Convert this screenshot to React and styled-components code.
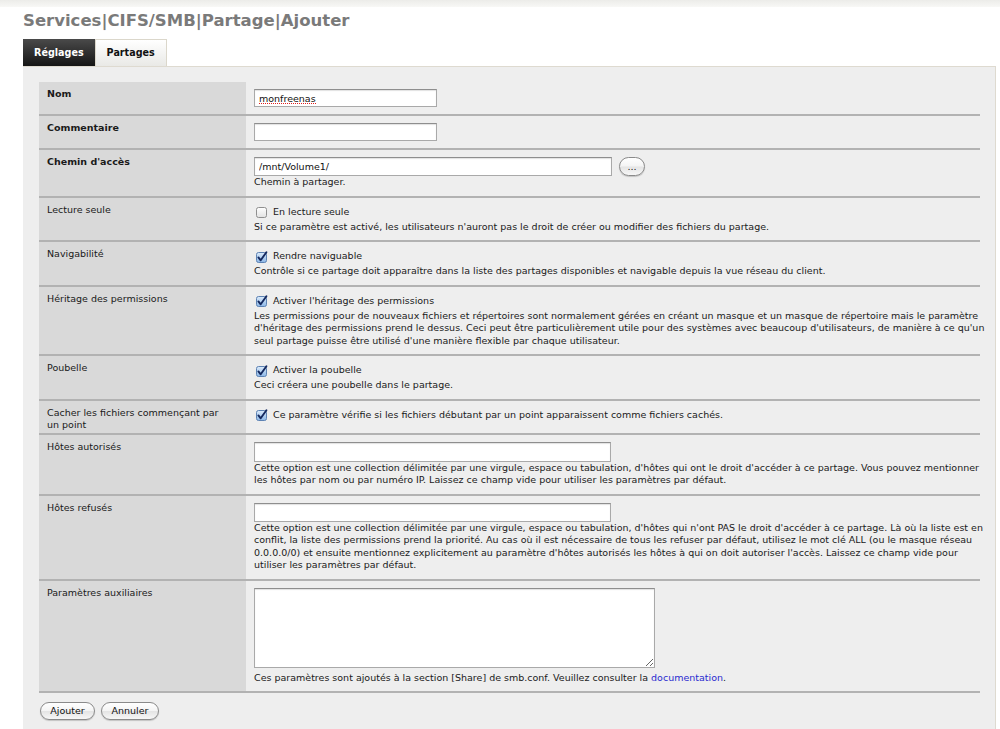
import React from 'react';
import styled, { createGlobalStyle } from 'styled-components';

const Global = createGlobalStyle`
  html, body { margin: 0; padding: 0; background: #ffffff; }
  body { font-family: "DejaVu Sans", Verdana, sans-serif; color: #1c1c1c; }
`;

const TopBand = styled.div`
  height: 7px;
  background: linear-gradient(#ecece9, #f8f8f6);
`;

const Page = styled.div`
  padding: 0 4px 0 23px;
`;

const Title = styled.h1`
  margin: 3px 0 0;
  font-size: 16.5px;
  line-height: 22px;
  font-weight: bold;
  color: #7a7a7a;
`;

const TabBar = styled.div`
  display: flex;
  margin-top: 7px;
  height: 27px;
`;

const Tab = styled.div`
  box-sizing: border-box;
  height: 27px;
  padding: 0 11px;
  font-size: 9.6px;
  font-weight: bold;
  line-height: ${p => (p.$active ? '27px' : '26px')};
  color: ${p => (p.$active ? '#ffffff' : '#111111')};
  background: ${p =>
    p.$active
      ? 'linear-gradient(#4a4a4a, #151515)'
      : 'linear-gradient(#ffffff, #e9e9e6)'};
  border: ${p => (p.$active ? 'none' : '1px solid #dbd7cb')};
  border-bottom: none;
`;

const Panel = styled.div`
  background: #eeeeee;
  border-top: 1px solid #dedad0;
  border-right: 1px solid #dedad0;
  padding: 15px 15px 12px 16px;
`;

const Table = styled.div`
  display: flex;
  flex-direction: column;
`;

const Row = styled.div`
  display: grid;
  grid-template-columns: 207px 1fr;
  border-bottom: 2px solid #b2b2b2;
`;

const Label = styled.div`
  background: #d9d9d9;
  padding: 6px 8px 2px;
  font-size: 9.5px;
  line-height: 12px;
  font-weight: ${p => (p.$bold ? 'bold' : 'normal')};
  color: #1a1a1a;
`;

const Value = styled.div`
  padding: 7px 8px 7px;
  font-size: 9.5px;
  line-height: 12.5px;
  color: #1a1a1a;
  min-width: 0;
`;

const FieldLine = styled.div`
  display: flex;
  align-items: center;
  gap: 7px;
`;

const TextInput = styled.input`
  box-sizing: border-box;
  display: block;
  width: ${p => p.$w}px;
  height: ${p => p.$h || 18}px;
  margin: 0;
  padding: 0 4px;
  border: 1px solid #a9a9a9;
  border-top-color: #8e8e8e;
  box-shadow: inset 0 1px 1px rgba(0, 0, 0, 0.12);
  background-color: #ffffff;
  background-image: ${p =>
    p.$spell
      ? 'repeating-linear-gradient(90deg, #e02020 0 1px, transparent 1px 2px)'
      : 'none'};
  background-repeat: no-repeat;
  background-size: 58px 1px;
  background-position: 4px 13px;
  font-family: "DejaVu Sans", Verdana, sans-serif;
  font-size: 9.5px;
  color: #111;
  outline: none;
`;

const TextArea = styled.textarea`
  box-sizing: border-box;
  display: block;
  width: 401px;
  height: 80px;
  margin: 0 0 4px;
  border: 1px solid #a9a9a9;
  border-top-color: #8e8e8e;
  box-shadow: inset 0 1px 1px rgba(0, 0, 0, 0.12);
  background: #ffffff;
  font-family: "DejaVu Sans", Verdana, sans-serif;
  font-size: 9.5px;
`;

const Pill = styled.button`
  box-sizing: border-box;
  height: ${p => p.$h || 18}px;
  width: ${p => p.$w}px;
  padding: 0;
  border: 1px solid #8a8a8a;
  border-radius: 10px;
  background: linear-gradient(#ffffff, #f4f4f4 48%, #e4e4e4 52%, #f7f7f7);
  box-shadow: 0 1px 1px rgba(0, 0, 0, 0.18);
  font-family: "DejaVu Sans", Verdana, sans-serif;
  font-size: 9.5px;
  line-height: 14px;
  color: #111;
`;

const CheckLine = styled.label`
  display: flex;
  align-items: center;
  gap: 5px;
  height: 15px;
  padding-left: 2px;
  margin-bottom: ${p => p.$mb || 0}px;
  white-space: nowrap;
`;

const Desc = styled.div`
  font-size: 9.5px;
  line-height: 12.5px;
  white-space: nowrap;
`;

const Link = styled.a`
  color: #2a2ad0;
  text-decoration: none;
`;

const ButtonBar = styled.div`
  display: flex;
  gap: 6px;
  margin: 9px 0 0 1px;
`;

function Check({ on }) {
  return (
    <svg width="12" height="12" viewBox="0 0 12 12" aria-hidden="true">
      <defs>
        <linearGradient id="cbOn" x1="0" y1="0" x2="0" y2="1">
          <stop offset="0" stopColor="#dcebfb" />
          <stop offset="1" stopColor="#8bb6e6" />
        </linearGradient>
        <linearGradient id="cbOff" x1="0" y1="0" x2="0" y2="1">
          <stop offset="0" stopColor="#ffffff" />
          <stop offset="1" stopColor="#e2e2e2" />
        </linearGradient>
      </defs>
      <rect
        x="0.5"
        y="1.5"
        width="10"
        height="10"
        rx="2"
        fill={on ? 'url(#cbOn)' : 'url(#cbOff)'}
        stroke={on ? '#5d82b3' : '#8f8f8f'}
      />
      {on && (
        <path
          d="M2.4 6.4 L4.7 9.3 L10.4 1.2"
          fill="none"
          stroke="#14285e"
          strokeWidth="1.9"
          strokeLinecap="round"
          strokeLinejoin="round"
        />
      )}
    </svg>
  );
}

export default function App() {
  return (
    <>
      <Global />
      <TopBand />
      <Page>
        <Title>Services|CIFS/SMB|Partage|Ajouter</Title>
        <TabBar>
          <Tab $active>Réglages</Tab>
          <Tab>Partages</Tab>
        </TabBar>
        <Panel>
          <Table>
            <Row>
              <Label $bold>Nom</Label>
              <Value>
                <TextInput $w={183} $spell defaultValue="monfreenas" />
              </Value>
            </Row>
            <Row>
              <Label $bold>Commentaire</Label>
              <Value>
                <TextInput $w={183} />
              </Value>
            </Row>
            <Row>
              <Label $bold>Chemin d'accès</Label>
              <Value>
                <FieldLine>
                  <TextInput $w={358} $h={19} defaultValue="/mnt/Volume1/" />
                  <Pill $w={26} $h={19}>...</Pill>
                </FieldLine>
                <Desc>Chemin à partager.</Desc>
              </Value>
            </Row>
            <Row>
              <Label>Lecture seule</Label>
              <Value>
                <CheckLine $mb={1}>
                  <Check />
                  En lecture seule
                </CheckLine>
                <Desc>
                  Si ce paramètre est activé, les utilisateurs n'auront pas le droit de créer ou modifier des fichiers du partage.
                </Desc>
              </Value>
            </Row>
            <Row>
              <Label>Navigabilité</Label>
              <Value>
                <CheckLine $mb={1}>
                  <Check on />
                  Rendre naviguable
                </CheckLine>
                <Desc>
                  Contrôle si ce partage doit apparaître dans la liste des partages disponibles et navigable depuis la vue réseau du client.
                </Desc>
              </Value>
            </Row>
            <Row>
              <Label>Héritage des permissions</Label>
              <Value>
                <CheckLine $mb={1}>
                  <Check on />
                  Activer l'héritage des permissions
                </CheckLine>
                <Desc>
                  Les permissions pour de nouveaux fichiers et répertoires sont normalement gérées en créant un masque et un masque de répertoire mais le paramètre
                  <br />
                  d'héritage des permissions prend le dessus. Ceci peut être particulièrement utile pour des systèmes avec beaucoup d'utilisateurs, de manière à ce qu'un
                  <br />
                  seul partage puisse être utilisé d'une manière flexible par chaque utilisateur.
                </Desc>
              </Value>
            </Row>
            <Row>
              <Label>Poubelle</Label>
              <Value>
                <CheckLine $mb={1}>
                  <Check on />
                  Activer la poubelle
                </CheckLine>
                <Desc>Ceci créera une poubelle dans le partage.</Desc>
              </Value>
            </Row>
            <Row>
              <Label>
                Cacher les fichiers commençant par
                <br />
                un point
              </Label>
              <Value>
                <CheckLine>
                  <Check on />
                  Ce paramètre vérifie si les fichiers débutant par un point apparaissent comme fichiers cachés.
                </CheckLine>
              </Value>
            </Row>
            <Row>
              <Label>Hôtes autorisés</Label>
              <Value>
                <TextInput $w={357} $h={20} />
                <Desc>
                  Cette option est une collection délimitée par une virgule, espace ou tabulation, d'hôtes qui ont le droit d'accéder à ce partage. Vous pouvez mentionner
                  <br />
                  les hôtes par nom ou par numéro IP. Laissez ce champ vide pour utiliser les paramètres par défaut.
                </Desc>
              </Value>
            </Row>
            <Row>
              <Label>Hôtes refusés</Label>
              <Value>
                <TextInput $w={357} $h={19} />
                <Desc>
                  Cette option est une collection délimitée par une virgule, espace ou tabulation, d'hôtes qui n'ont PAS le droit d'accéder à ce partage. Là où la liste est en
                  <br />
                  conflit, la liste des permissions prend la priorité. Au cas où il est nécessaire de tous les refuser par défaut, utilisez le mot clé ALL (ou le masque réseau
                  <br />
                  0.0.0.0/0) et ensuite mentionnez explicitement au paramètre d'hôtes autorisés les hôtes à qui on doit autoriser l'accès. Laissez ce champ vide pour
                  <br />
                  utiliser les paramètres par défaut.
                </Desc>
              </Value>
            </Row>
            <Row>
              <Label>Paramètres auxiliaires</Label>
              <Value>
                <TextArea />
                <Desc>
                  Ces paramètres sont ajoutés à la section [Share] de smb.conf. Veuillez consulter la{' '}
                  <Link href="#">documentation</Link>.
                </Desc>
              </Value>
            </Row>
          </Table>
          <ButtonBar>
            <Pill $w={55}>Ajouter</Pill>
            <Pill $w={58}>Annuler</Pill>
          </ButtonBar>
        </Panel>
      </Page>
    </>
  );
}
